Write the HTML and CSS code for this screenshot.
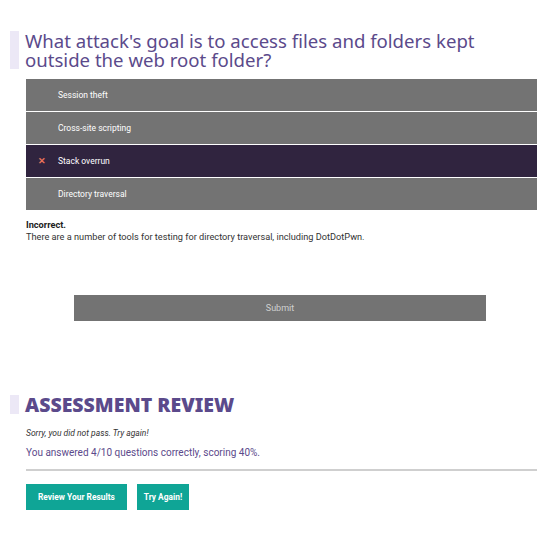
FILE: index.html
```html
<!DOCTYPE html>
<html>
<head>
<meta charset="utf-8">
<link rel="stylesheet" href="styles.css">
</head>
<body>
<div class="page">
  <section class="question">
    <h2 class="q-title">What attack's goal is to access files and folders kept outside the web root folder?</h2>
    <ul class="options">
      <li class="option"><span class="mark"></span><span>Session theft</span></li>
      <li class="option"><span class="mark"></span><span>Cross-site scripting</span></li>
      <li class="option selected"><span class="mark">&#x2715;</span><span>Stack overrun</span></li>
      <li class="option"><span class="mark"></span><span>Directory traversal</span></li>
    </ul>
    <div class="feedback">
      <div class="fb-title">Incorrect.</div>
      <div class="fb-text">There are a number of tools for testing for directory traversal, including DotDotPwn.</div>
    </div>
    <div class="submit-row"><button class="submit">Submit</button></div>
  </section>
  <section class="review">
    <h2 class="r-title">ASSESSMENT REVIEW</h2>
    <p class="sorry">Sorry, you did not pass. Try again!</p>
    <p class="score">You answered 4/10 questions correctly, scoring 40%.</p>
    <div class="actions">
      <button class="btn btn-wide">Review Your Results</button>
      <button class="btn btn-narrow">Try Again!</button>
    </div>
  </section>
</div>
</body>
</html>
```
FILE: styles.css
```css
* { box-sizing: border-box; }
body { margin: 0; background: #fff; font-family: "Roboto", sans-serif; }
.page { padding: 31px 12px 0 10px; }
.q-title {
  margin: 0;
  border-left: 9px solid #ece8f6;
  padding-left: 6px;
  font-family: "Noto Sans", sans-serif;
  font-weight: 400;
  font-size: 18.6px;
  line-height: 19px;
  color: #5b4a8b;
}
.options { list-style: none; margin: 10px 0 0 16px; padding: 0; }
.option {
  display: flex; align-items: center;
  height: 32px;
  margin-bottom: 1px;
  background: #737373;
  color: #fff;
  font-size: 8.5px;
}
.option.selected { background: #30243f; }
.mark { width: 32px; text-align: center; color: #e8735a; font-weight: 700; font-size: 9px; }
.feedback { margin: 9px 0 0 16px; font-size: 9.2px; color: #333; line-height: 12px; }
.fb-title { font-weight: 700; color: #222; }
.submit-row { margin-top: 52px; padding-left: 64px; padding-right: 51px; }
.submit {
  display: block; width: 100%; height: 26px; border: 0;
  background: #737373; color: #d0d0d0;
  font-family: "Roboto", sans-serif; font-size: 9px;
}
.review { margin-top: 74px; }
.r-title {
  margin: 0;
  border-left: 9px solid #ece8f6;
  padding-left: 6px;
  font-family: "Noto Sans", sans-serif;
  font-weight: 900;
  font-size: 19.5px;
  line-height: 19px;
  color: #5b4a8b;
}
.sorry { margin: 14px 0 0 16px; font-style: italic; font-size: 8.5px; color: #333; }
.score {
  margin: 9px 0 0 16px; padding-bottom: 11px;
  border-bottom: 2px solid #cfcfcf;
  font-size: 10px; color: #5b4a8b;
}
.actions { display: flex; gap: 10px; margin: 13px 0 0 16px; }
.btn {
  height: 26px; border: 0;
  background: #0fa596; color: #fff;
  font-family: "Roboto", sans-serif; font-weight: 700; font-size: 8.4px;
}
.btn-wide { padding: 0 12px; }
.btn-narrow { padding: 0 7px; }
```
